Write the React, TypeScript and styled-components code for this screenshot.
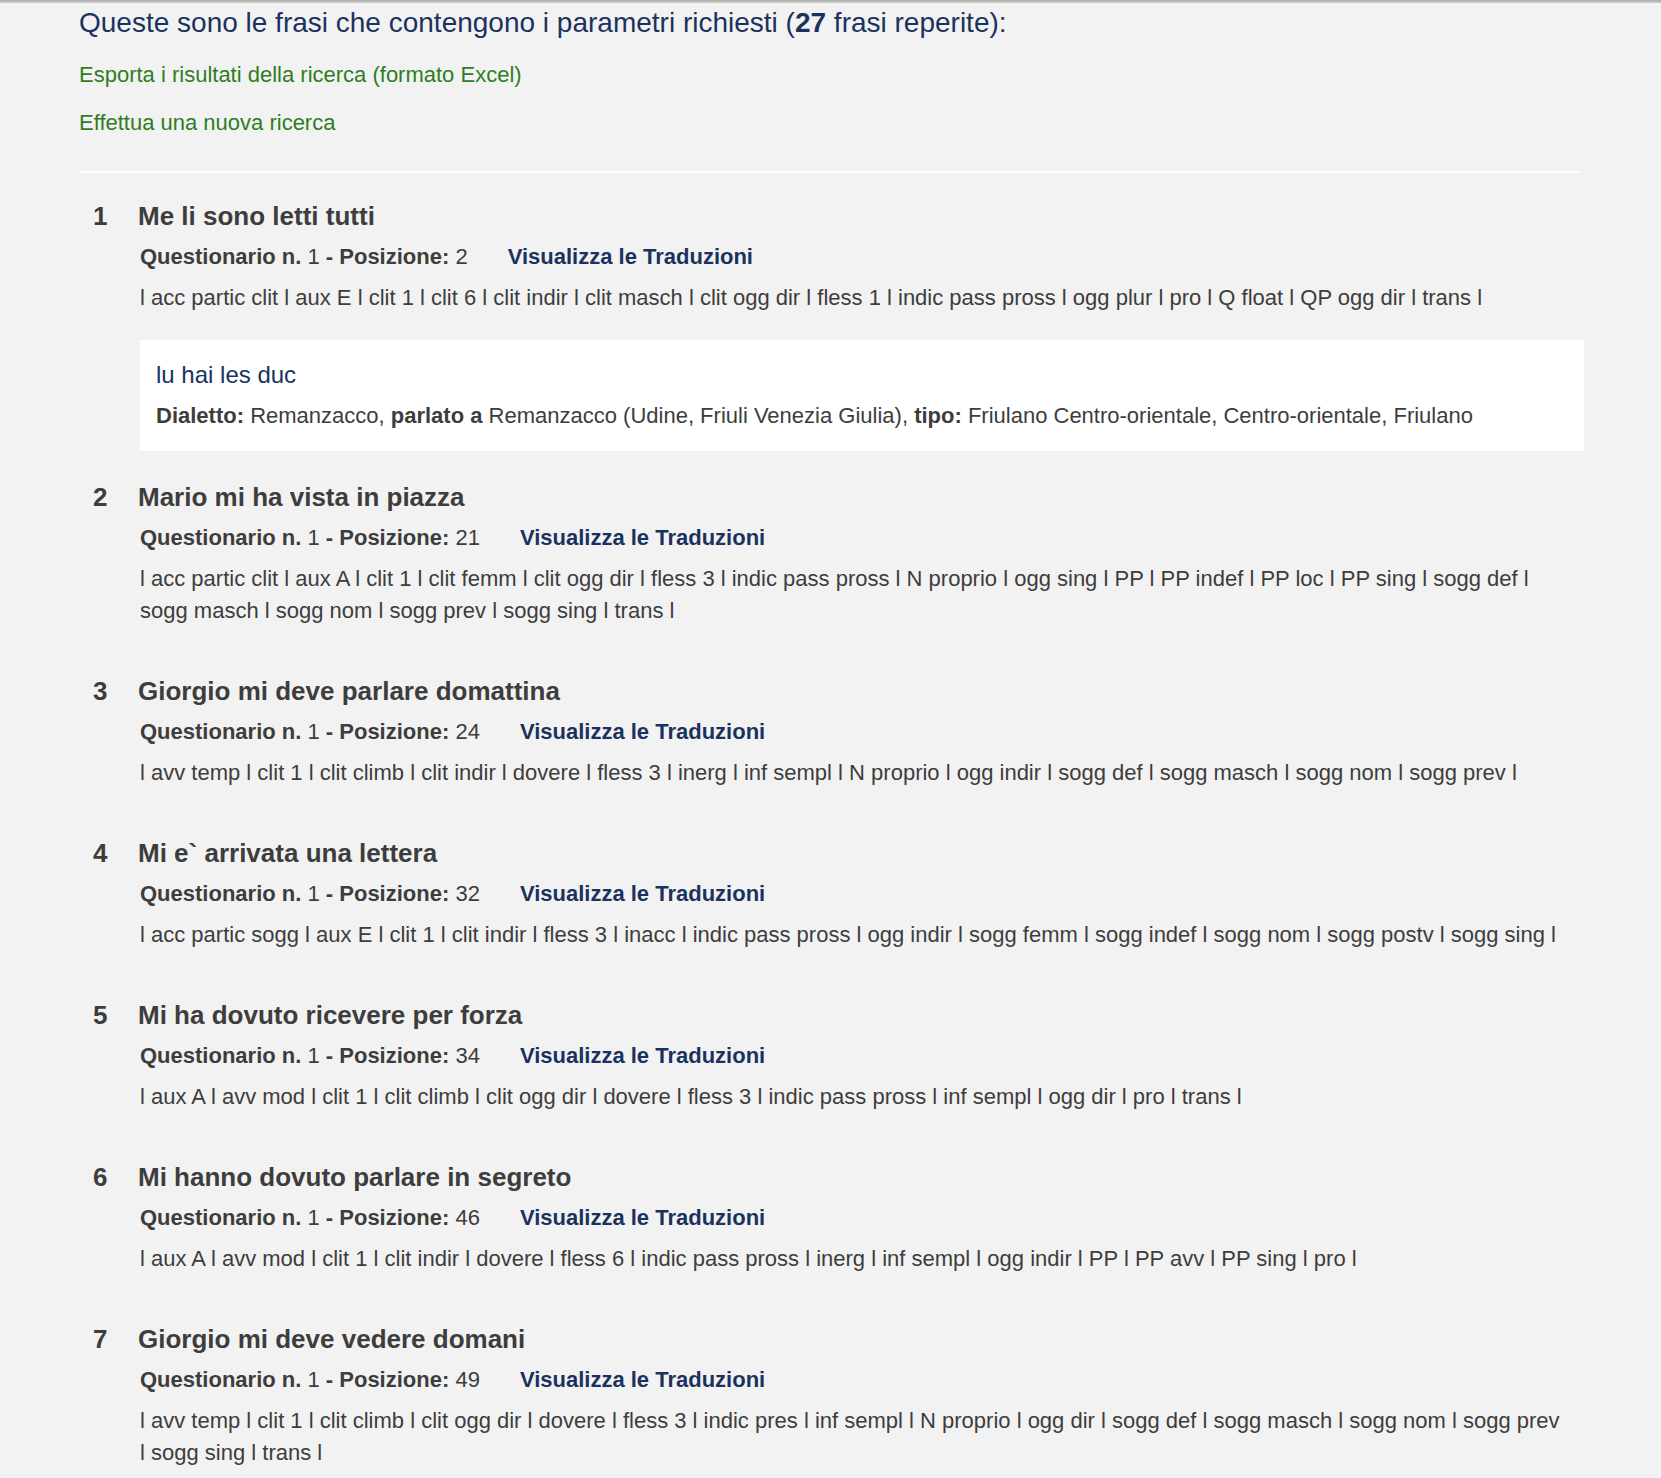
import styled, { createGlobalStyle } from 'styled-components';

const GlobalStyle = createGlobalStyle`
  html, body {
    margin: 0;
    padding: 0;
    background: #f2f2f2;
  }
  body {
    font-family: "Liberation Sans", Arial, Helvetica, sans-serif;
    color: #3d3d3d;
  }
`;

const TopRule = styled.div`
  height: 3px;
  background: linear-gradient(#a9a9a9, #cfcfcf);
`;

const Page = styled.div`
  padding: 5px 77px 40px 79px;
`;

const Heading = styled.h1`
  margin: 0;
  font-size: 28px;
  line-height: 30px;
  font-weight: normal;
  color: #1b325f;

  b {
    font-weight: bold;
  }
`;

const GreenLink = styled.a<{ $gap: number }>`
  display: block;
  margin-top: ${(p) => p.$gap}px;
  font-size: 22px;
  line-height: 24px;
  color: #2f7d1f;
  text-decoration: none;
`;

const Rule = styled.hr`
  margin: 36px 4px 28px 0;
  border: 0;
  height: 2px;
  background: #ffffff;
`;

const Item = styled.div`
  display: grid;
  grid-template-columns: 61px 1fr;
  margin-bottom: 31px;
`;

const Num = styled.div`
  padding-left: 14px;
  font-size: 26px;
  line-height: 30px;
  font-weight: bold;
`;

const Body = styled.div`
  min-width: 0;
`;

const Title = styled.div`
  font-size: 26px;
  line-height: 30px;
  font-weight: bold;
  margin-left: -2px;
`;

const Meta = styled.div`
  margin-top: 11px;
  font-size: 22px;
  line-height: 30px;

  b {
    font-weight: bold;
  }
`;

const ShowLink = styled.a`
  margin-left: 40px;
  font-weight: bold;
  color: #1b325f;
  text-decoration: none;
`;

const Tags = styled.div`
  margin-top: 10px;
  margin-bottom: 18px;
  padding-right: 20px;
  font-size: 22px;
  line-height: 32px;
`;

/* margin collapses with the tags' bottom margin */
const Translation = styled.div`
  margin-top: 26px;
  background: #ffffff;
  padding: 20px 16px;
  font-size: 22px;
  line-height: 30px;
`;

const TranslationText = styled.div`
  font-size: 24px;
  color: #1b325f;
  margin-bottom: 11px;
`;

type Sentence = {
  title: string;
  pos: number;
  tags: string[];
  translation?: { text: string; dialect: string; place: string; type: string };
};

const sentences: Sentence[] = [
  {
    title: 'Me li sono letti tutti',
    pos: 2,
    tags: ['acc partic clit', 'aux E', 'clit 1', 'clit 6', 'clit indir', 'clit masch', 'clit ogg dir', 'fless 1', 'indic pass pross', 'ogg plur', 'pro', 'Q float', 'QP ogg dir', 'trans'],
    translation: {
      text: 'lu hai les duc',
      dialect: 'Remanzacco',
      place: 'Remanzacco (Udine, Friuli Venezia Giulia)',
      type: 'Friulano Centro-orientale, Centro-orientale, Friulano',
    },
  },
  {
    title: 'Mario mi ha vista in piazza',
    pos: 21,
    tags: ['acc partic clit', 'aux A', 'clit 1', 'clit femm', 'clit ogg dir', 'fless 3', 'indic pass pross', 'N proprio', 'ogg sing', 'PP', 'PP indef', 'PP loc', 'PP sing', 'sogg def', 'sogg masch', 'sogg nom', 'sogg prev', 'sogg sing', 'trans'],
  },
  {
    title: 'Giorgio mi deve parlare domattina',
    pos: 24,
    tags: ['avv temp', 'clit 1', 'clit climb', 'clit indir', 'dovere', 'fless 3', 'inerg', 'inf sempl', 'N proprio', 'ogg indir', 'sogg def', 'sogg masch', 'sogg nom', 'sogg prev'],
  },
  {
    title: 'Mi e` arrivata una lettera',
    pos: 32,
    tags: ['acc partic sogg', 'aux E', 'clit 1', 'clit indir', 'fless 3', 'inacc', 'indic pass pross', 'ogg indir', 'sogg femm', 'sogg indef', 'sogg nom', 'sogg postv', 'sogg sing'],
  },
  {
    title: 'Mi ha dovuto ricevere per forza',
    pos: 34,
    tags: ['aux A', 'avv mod', 'clit 1', 'clit climb', 'clit ogg dir', 'dovere', 'fless 3', 'indic pass pross', 'inf sempl', 'ogg dir', 'pro', 'trans'],
  },
  {
    title: 'Mi hanno dovuto parlare in segreto',
    pos: 46,
    tags: ['aux A', 'avv mod', 'clit 1', 'clit indir', 'dovere', 'fless 6', 'indic pass pross', 'inerg', 'inf sempl', 'ogg indir', 'PP', 'PP avv', 'PP sing', 'pro'],
  },
  {
    title: 'Giorgio mi deve vedere domani',
    pos: 49,
    tags: ['avv temp', 'clit 1', 'clit climb', 'clit ogg dir', 'dovere', 'fless 3', 'indic pres', 'inf sempl', 'N proprio', 'ogg dir', 'sogg def', 'sogg masch', 'sogg nom', 'sogg prev', 'sogg sing', 'trans'],
  },
];

export default function App() {
  return (
    <>
      <GlobalStyle />
      <TopRule />
      <Page>
        <Heading>
          Queste sono le frasi che contengono i parametri richiesti (<b>27</b> frasi reperite):
        </Heading>
        <GreenLink $gap={25} href="#">Esporta i risultati della ricerca (formato Excel)</GreenLink>
        <GreenLink $gap={24} href="#">Effettua una nuova ricerca</GreenLink>
        <Rule />

        {sentences.map((s, i) => (
          <Item key={s.pos}>
            <Num>{i + 1}</Num>
            <Body>
              <Title>{s.title}</Title>
              <Meta>
                <b>Questionario n.</b> 1 <b>- Posizione:</b> {s.pos}
                <ShowLink href="#">Visualizza le Traduzioni</ShowLink>
              </Meta>
              <Tags>l {s.tags.join(' l ')} l</Tags>
              {s.translation && (
                <Translation>
                  <TranslationText>{s.translation.text}</TranslationText>
                  <div>
                    <b>Dialetto:</b> {s.translation.dialect}, <b>parlato a</b> {s.translation.place},{' '}
                    <b>tipo:</b> {s.translation.type}
                  </div>
                </Translation>
              )}
            </Body>
          </Item>
        ))}
      </Page>
    </>
  );
}
